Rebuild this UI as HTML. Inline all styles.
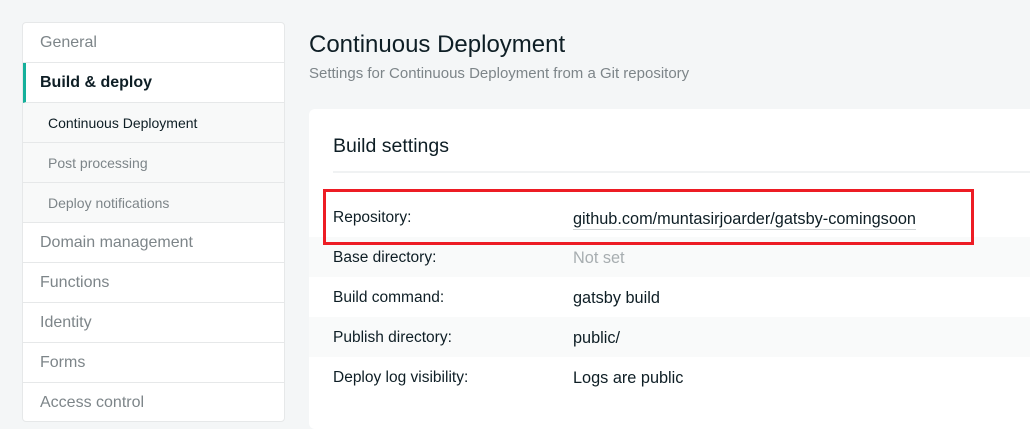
<!DOCTYPE html>
<html><head><style>
*{margin:0;padding:0;box-sizing:border-box}
body{width:1030px;height:412px;overflow:hidden;background:#f4f6f7;font-family:"Liberation Sans",sans-serif;position:relative}
.side{position:absolute;left:22px;top:22px;width:263px;height:400px;background:#fff;border:1px solid #e6e8e9;border-radius:4px;overflow:hidden}
.it{height:40px;border-bottom:1px solid #e6e8e9;padding-left:17px;line-height:40px;font-size:16px;color:#7d8589}
.it.act{color:#0e1e25;font-weight:bold;border-left:3px solid #15b09b;padding-left:14px}
.sub{background:#f8f9f9;padding-left:25px;font-size:14px;color:#7d8589}
.sub.on{color:#0e1e25}
h1{position:absolute;left:309px;top:31px;font-size:24px;font-weight:normal;color:#0e1e25}
.subt{position:absolute;left:309px;top:65px;font-size:15px;color:#7d8589}
.card{position:absolute;left:309px;top:109px;width:740px;height:320px;background:#fff;border-radius:6px}
.card h2{position:absolute;left:24px;top:26px;font-size:19.5px;font-weight:normal;color:#0e1e25}
.div{position:absolute;left:24px;right:0;top:62px;height:2px;background:#f0f2f3}
.row{position:absolute;left:0;right:0;height:40px;line-height:42px;font-size:15.5px;color:#0e1e25}
.row.g{background:#f9fafa}
.row .l{position:absolute;left:24px}
.row .v{position:absolute;left:264px;font-size:16.3px}
.red{position:absolute;left:323px;top:189px;width:651px;height:56px;border:3.5px solid #ed1c24}
</style></head><body>
<div class="side">
<div class="it">General</div>
<div class="it act">Build &amp; deploy</div>
<div class="it sub on">Continuous Deployment</div>
<div class="it sub">Post processing</div>
<div class="it sub">Deploy notifications</div>
<div class="it">Domain management</div>
<div class="it">Functions</div>
<div class="it">Identity</div>
<div class="it">Forms</div>
<div class="it">Access control</div>
</div>
<h1>Continuous Deployment</h1>
<div class="subt">Settings for Continuous Deployment from a Git repository</div>
<div class="card">
<h2>Build settings</h2>
<div class="div"></div>
<div class="row" style="top:88px"><span class="l">Repository:</span><span class="v" style="border-bottom:1px solid #cfd3d5;line-height:20px;top:12px">github.com/muntasirjoarder/gatsby-comingsoon</span></div>
<div class="row g" style="top:128px"><span class="l">Base directory:</span><span class="v" style="color:#a7adb0">Not set</span></div>
<div class="row" style="top:168px"><span class="l">Build command:</span><span class="v">gatsby build</span></div>
<div class="row g" style="top:208px"><span class="l">Publish directory:</span><span class="v">public/</span></div>
<div class="row" style="top:248px"><span class="l">Deploy log visibility:</span><span class="v">Logs are public</span></div>
</div>
<div class="red"></div>
</body></html>
